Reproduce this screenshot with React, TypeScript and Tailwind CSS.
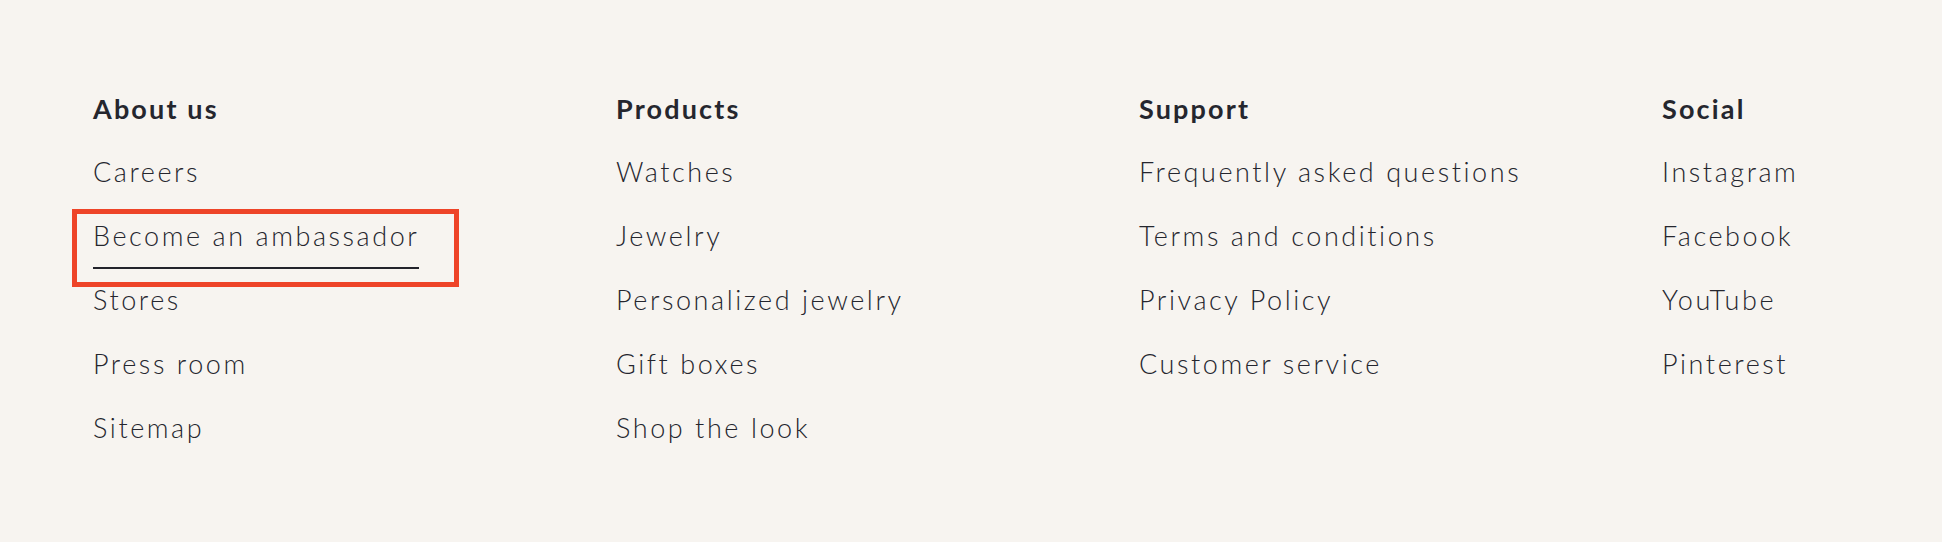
import React from "react";

type Col = { title: string; links: string[] };

const cols: Col[] = [
  { title: "About us", links: ["Careers", "Become an ambassador", "Stores", "Press room", "Sitemap"] },
  { title: "Products", links: ["Watches", "Jewelry", "Personalized jewelry", "Gift boxes", "Shop the look"] },
  { title: "Support", links: ["Frequently asked questions", "Terms and conditions", "Privacy Policy", "Customer service"] },
  { title: "Social", links: ["Instagram", "Facebook", "YouTube", "Pinterest"] },
];

export default function App() {
  return (
    <div
      className="w-[1942px] h-[542px] bg-[#f7f4f0] text-[#25262e] overflow-hidden"
      style={{ fontFamily: "Lato, 'Noto Sans', sans-serif" }}
    >
      <div className="grid grid-cols-[523px_523px_523px_1fr] pl-[93px] pt-[77px]">
        {cols.map((c) => (
          <div key={c.title} className="flex flex-col">
            <div className="h-[64px] text-[27px] leading-[64px] font-bold tracking-[0.08em]">{c.title}</div>
            {c.links.map((l) => {
              const active = l === "Become an ambassador";
              return (
                <div key={l} className="relative h-[64px]">
                  <a
                    href="#"
                    className={
                      "inline-block text-[27px] leading-[62px] font-light tracking-[0.095em] border-b-2 " +
                      (active ? "border-[#23232b]" : "border-transparent")
                    }
                  >
                    {l}
                  </a>
                  {active && (
                    <div className="absolute left-[-21px] top-[4px] w-[387px] h-[78px] border-[5px] border-[#ee4428] pointer-events-none" />
                  )}
                </div>
              );
            })}
          </div>
        ))}
      </div>
    </div>
  );
}
